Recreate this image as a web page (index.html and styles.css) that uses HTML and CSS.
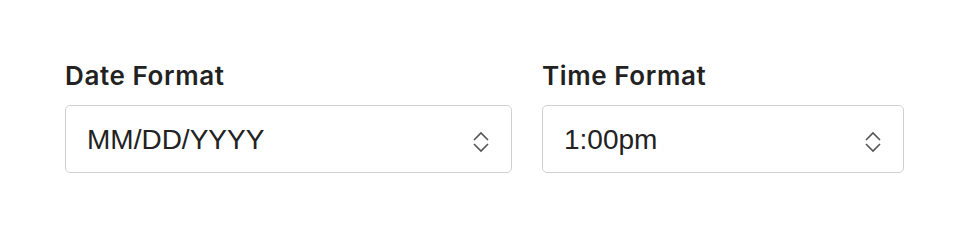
FILE: index.html
```html
<!DOCTYPE html>
<html lang="en">
<head>
    <meta charset="UTF-8">
    <meta name="viewport" content="width=device-width, initial-scale=1.0">
    <title>Formats</title>
    <link rel="stylesheet" href="styles.css">
</head>
<body>

    <div class="settings">
        <div class="field field-date">
            <label for="dateFormat">Date Format</label>
            <div class="select-box">
                <select id="dateFormat">
                    <option>MM/DD/YYYY</option>
                    <option>DD/MM/YYYY</option>
                    <option>YYYY-MM-DD</option>
                </select>
                <svg class="chevrons" width="16" height="22" viewBox="0 0 16 22">
                    <path d="M1 9 L8 2 L15 9" />
                    <path d="M1 13 L8 20 L15 13" />
                </svg>
            </div>
        </div>

        <div class="field field-time">
            <label for="timeFormat">Time Format</label>
            <div class="select-box">
                <select id="timeFormat">
                    <option>1:00pm</option>
                    <option>13:00</option>
                </select>
                <svg class="chevrons" width="16" height="22" viewBox="0 0 16 22">
                    <path d="M1 9 L8 2 L15 9" />
                    <path d="M1 13 L8 20 L15 13" />
                </svg>
            </div>
        </div>
    </div>

</body>
</html>
```

FILE: styles.css
```css
body {
    margin: 0;
    background-color: #ffffff;
    font-family: Inter, "Liberation Sans", sans-serif;
}

.settings {
    display: flex;
    gap: 30px;
    padding: 60px 0 0 65px;
}

.field {
    display: flex;
    flex-direction: column;
}

.field-date {
    width: 447px;
}

.field-time {
    width: 362px;
}

label {
    font-size: 26px;
    font-weight: 600;
    line-height: 32px;
    letter-spacing: 0.6px;
    color: #222;
    margin-bottom: 13px;
}

.select-box {
    position: relative;
}

select {
    appearance: none;
    -webkit-appearance: none;
    width: 100%;
    height: 68px;
    padding: 0 60px 0 21px;
    border: 1px solid #d0d0d0;
    border-radius: 5px;
    background-color: #fff;
    font-family: "Liberation Sans", Arial, sans-serif;
    font-size: 28px;
    color: #222;
    box-sizing: border-box;
}

.chevrons {
    position: absolute;
    right: 23px;
    top: 26px;
    pointer-events: none;
    fill: none;
    stroke: #555;
    stroke-width: 1.6;
}
```
